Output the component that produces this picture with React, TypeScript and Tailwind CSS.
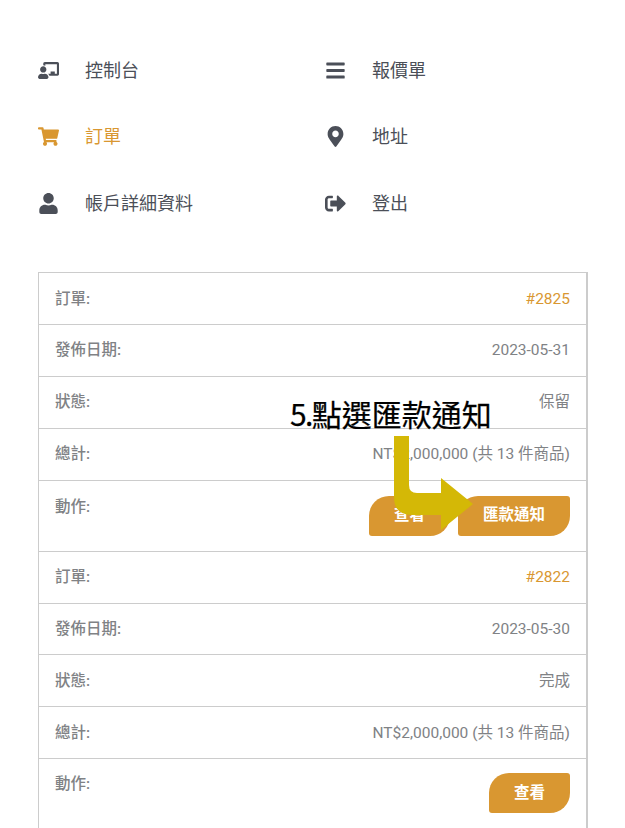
import React from "react";
import {
  FaBars,
  FaChalkboardTeacher,
  FaMapMarkerAlt,
  FaShoppingCart,
  FaSignOutAlt,
  FaUser,
} from "react-icons/fa";

const font = "font-['Roboto','Noto_Sans_CJK_TC',sans-serif]";

const NavItem = ({
  icon,
  label,
  active,
}: {
  icon: React.ReactNode;
  label: string;
  active?: boolean;
}) => (
  <div className={`flex h-[66.5px] items-center ${active ? "text-[#d99731]" : "text-[#4b4f58]"}`}>
    <span className="flex w-[47px] items-center text-[21px]">{icon}</span>
    <span className="text-[18px]">{label}</span>
  </div>
);

const Row = ({
  label,
  children,
  tall,
}: {
  label: string;
  children: React.ReactNode;
  tall?: string;
}) => (
  <div
    className={`flex justify-between border-b border-[#cccccc] px-4 text-[15.5px] text-[#808285] ${
      tall ? `h-[71.3px] ${tall}` : "h-[51.8px] items-center pt-px"
    }`}
  >
    <span className="font-medium">{label}:</span>
    {children}
  </div>
);

const Btn = ({ children }: { children: React.ReactNode }) => (
  <button className="h-10 rounded-tl-[20px] rounded-br-[20px] rounded-tr-[3px] rounded-bl-[3px] bg-[#d99731] px-[25px] pt-px text-[15.5px] font-bold text-white">
    {children}
  </button>
);

const Order = ({
  id,
  date,
  status,
  pay,
}: {
  id: string;
  date: string;
  status: string;
  pay?: boolean;
}) => (
  <>
    <Row label="訂單">
      <span className="text-[#d99731]">{id}</span>
    </Row>
    <Row label="發佈日期">
      <span>{date}</span>
    </Row>
    <Row label="狀態">
      <span>{status}</span>
    </Row>
    <Row label="總計">
      <span>NT$2,000,000 (共 13 件商品)</span>
    </Row>
    <Row label="動作" tall={pay ? "pt-[15px]" : "pt-[14px]"}>
      <div className="flex gap-2">
        <Btn>查看</Btn>
        {pay && <Btn>匯款通知</Btn>}
      </div>
    </Row>
  </>
);

export default function App() {
  return (
    <div className={`relative h-[828px] overflow-hidden bg-white px-[38px] pt-[37px] ${font}`}>
      <div className="grid grid-cols-[287px_1fr]">
        <NavItem icon={<FaChalkboardTeacher />} label="控制台" />
        <NavItem icon={<FaBars />} label="報價單" />
        <NavItem icon={<FaShoppingCart />} label="訂單" active />
        <NavItem icon={<FaMapMarkerAlt />} label="地址" />
        <NavItem icon={<FaUser />} label="帳戶詳細資料" />
        <NavItem icon={<FaSignOutAlt />} label="登出" />
      </div>

      <div className="mt-[35.9px] -mr-px border-t border-l border-r-2 border-[#cccccc]">
        <Order id="#2825" date="2023-05-31" status="保留" pay />
        <Order id="#2822" date="2023-05-30" status="完成" />
      </div>

      {/* Annotation over the table */}
      <div className="absolute left-[290px] top-[391px] font-['Noto_Sans_CJK_TC',sans-serif] text-[30px] leading-[44px] text-black [-webkit-text-stroke:0.25px_black]">
        <span className="tracking-[-1.6px]">5.</span>點選匯款通知
      </div>
      <svg className="absolute left-[390px] top-[432px]" width="90" height="104" viewBox="390 432 90 104">
        <path
          d="M394 436H409V485Q409 493 417 493H441V478L473 504L441 530V515H412Q394 515 394 497Z"
          fill="#d4b806"
        />
      </svg>
    </div>
  );
}
